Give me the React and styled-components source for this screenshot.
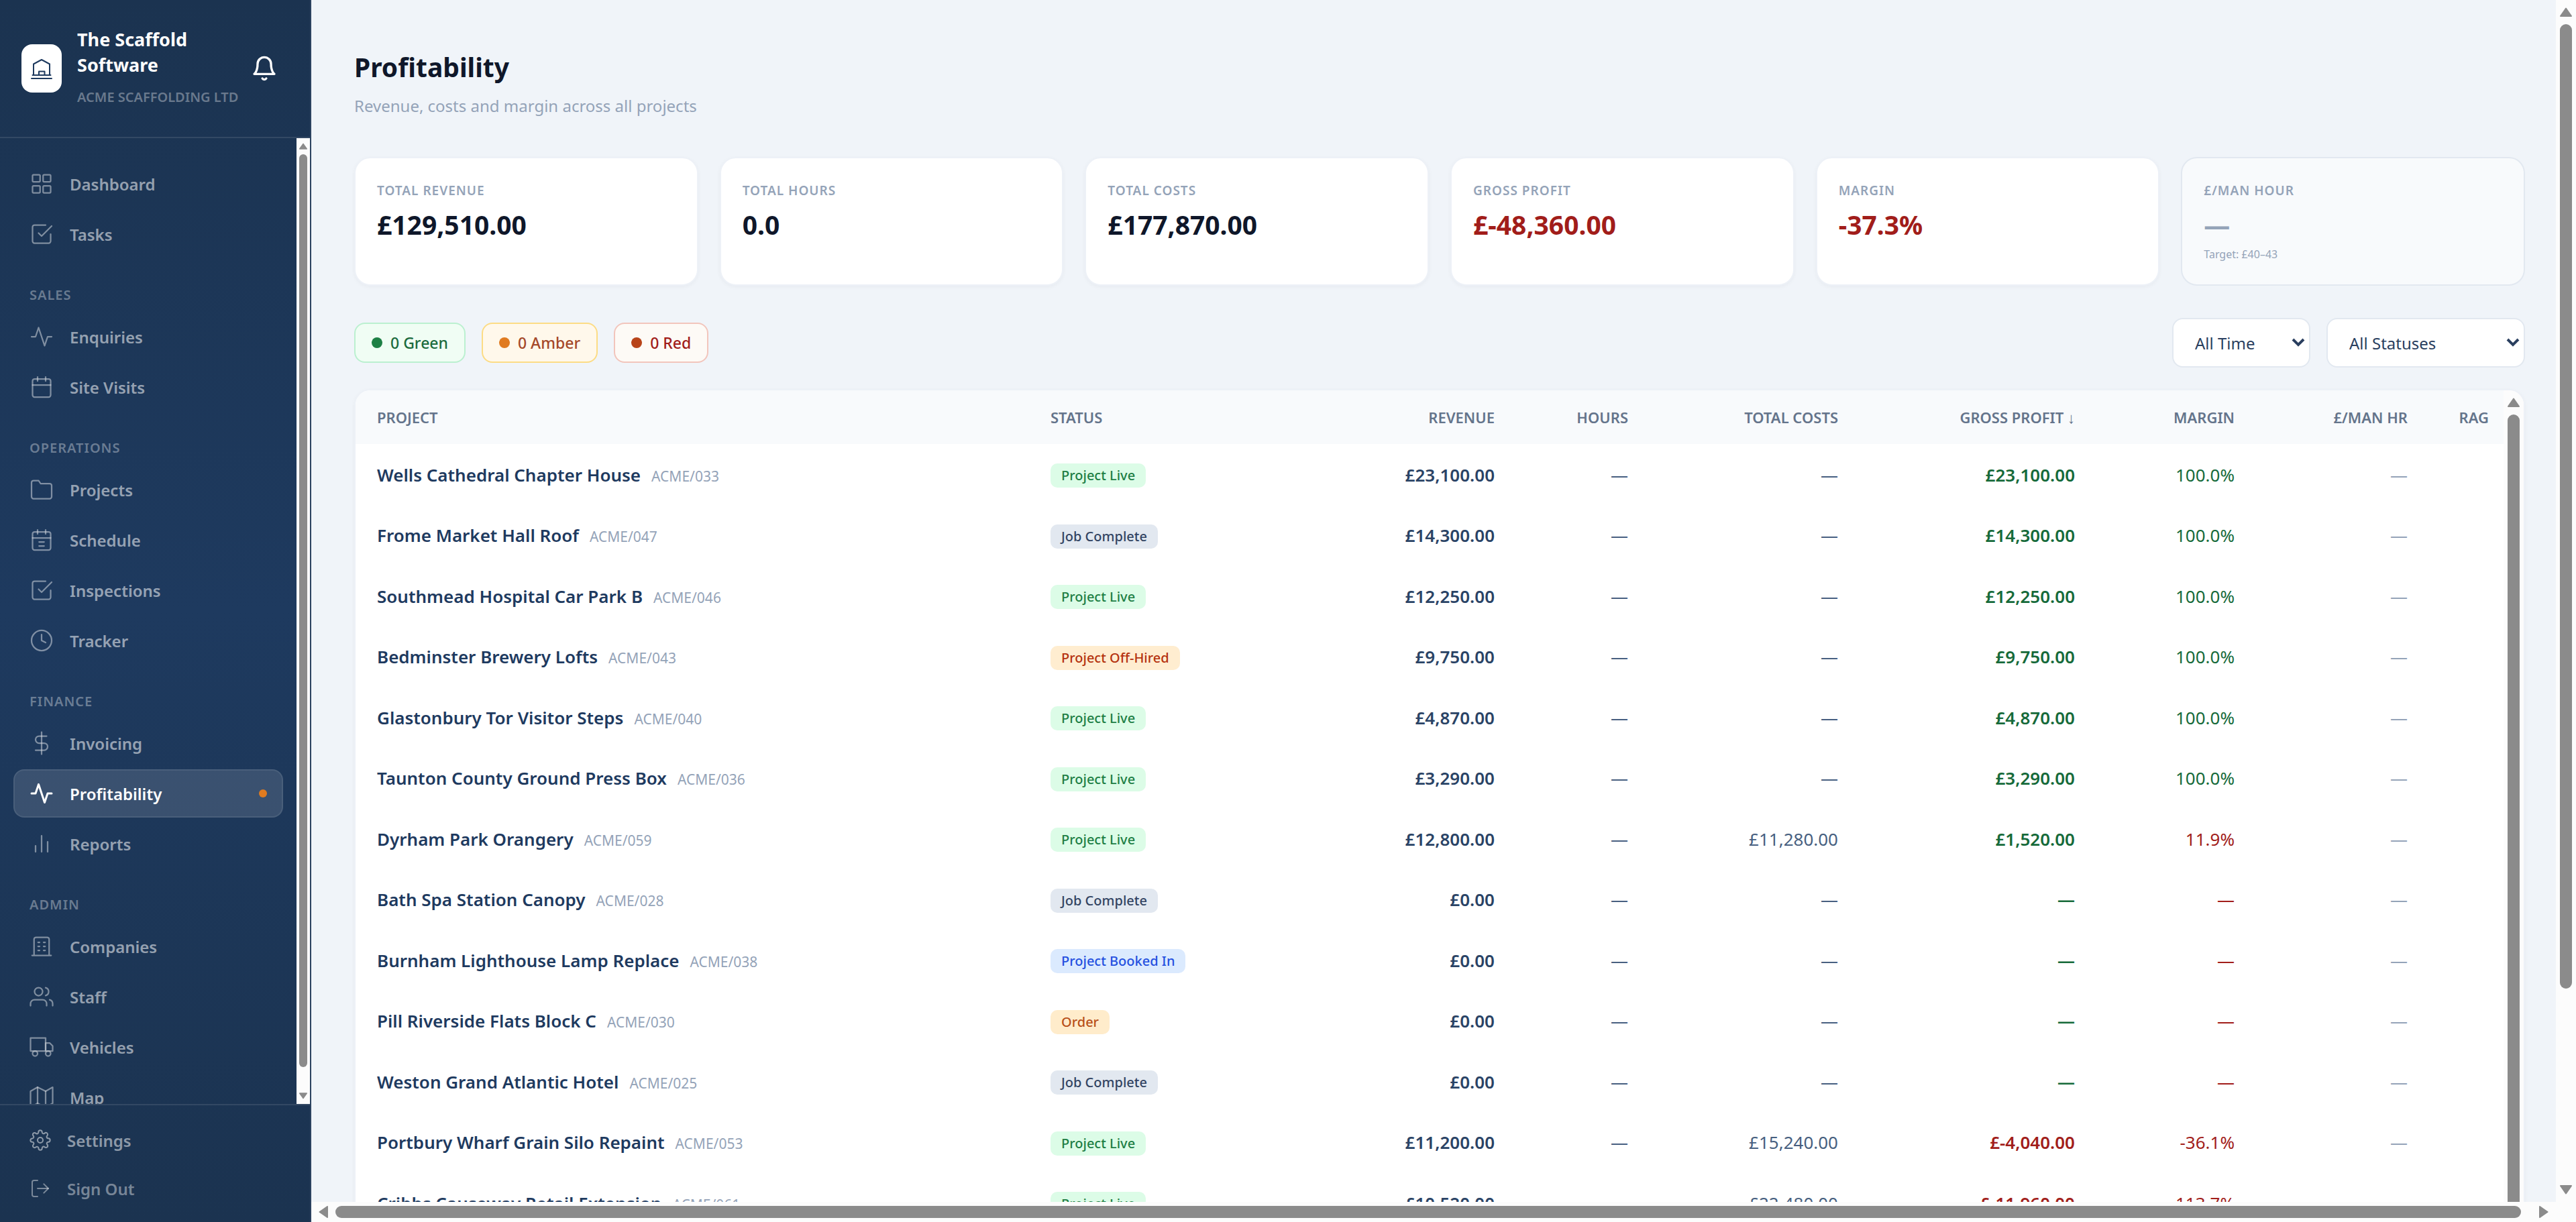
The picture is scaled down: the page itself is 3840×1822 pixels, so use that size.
import styled, { createGlobalStyle, css } from 'styled-components';
import {
    FiActivity, FiBarChart2, FiBell, FiCalendar, FiCheckSquare, FiClock, FiDollarSign,
    FiFolder, FiLogOut, FiMap, FiSettings, FiTruck, FiUsers,
} from 'react-icons/fi';

const GlobalStyle = createGlobalStyle`
    * {
        box-sizing: border-box;
    }
    body {
        margin: 0;
        font-family: "Noto Sans", "Segoe UI", sans-serif;
        background-color: #f0f4f9;
        color: #0f172a;
    }
    button, select {
        font-family: inherit;
    }
    a {
        color: inherit;
        text-decoration: none;
    }
`;

const Shell = styled.div`
    display: grid;
    grid-template-columns: 464px minmax(0, 1fr);
    height: 100vh;
    overflow: hidden;
`;

/* ---------- scrollbars ---------- */

const Track = styled.div`
    display: flex;
    flex: none;
    flex-direction: ${({ $horizontal }) => ($horizontal ? 'row' : 'column')};
    align-items: center;
    ${({ $horizontal }) => ($horizontal ? 'height' : 'width')}: ${({ $thick }) => $thick}px;
    background-color: #fcfcfc;
`;

const ArrowBox = styled.div`
    display: flex;
    flex: none;
    align-items: center;
    justify-content: center;
    width: ${({ $box }) => $box}px;
    height: ${({ $box }) => $box}px;
    color: #8b8b8b;
    svg {
        display: block;
        transform: rotate(${({ $turn }) => $turn}deg);
    }
`;

const ThumbLane = styled.div`
    display: flex;
    flex: 1;
    flex-direction: inherit;
    min-width: 0;
    min-height: 0;
`;

const Thumb = styled.div`
    flex: 0 0 ${({ $share }) => $share}%;
    ${({ $horizontal }) => ($horizontal ? 'height' : 'width')}: ${({ $size }) => $size}px;
    border-radius: 9px;
    background-color: #8b8b8b;
`;

const ScrollBar = ({ horizontal, thick = 30, thumb = 18, box = 36, share }) => {
    const arrow = (
        <svg width={thumb} height={thumb} viewBox="0 0 18 18" fill="currentColor" stroke="currentColor" strokeWidth="2" strokeLinejoin="round">
            <path d="M9 3.5 L17 15 H1 Z" />
        </svg>
    );
    return (
        <Track $horizontal={horizontal} $thick={thick} aria-hidden="true">
            <ArrowBox $box={box} $turn={horizontal ? -90 : 0}>{arrow}</ArrowBox>
            <ThumbLane>
                <Thumb $horizontal={horizontal} $size={thumb} $share={share} />
            </ThumbLane>
            <ArrowBox $box={box} $turn={horizontal ? 90 : 180}>{arrow}</ArrowBox>
        </Track>
    );
};

/* ---------- sidebar ---------- */

const Sidebar = styled.aside`
    display: flex;
    flex-direction: column;
    min-height: 0;
    border-right: 2px solid #2c4260;
    background: linear-gradient(180deg, #1b3350 0%, #1e3a5f 50%, #1b3350 100%);
`;

const Brand = styled.header`
    display: flex;
    align-items: center;
    padding: 40px 32px;
    border-bottom: 2px solid rgba(255, 255, 255, 0.1);
`;

const Logo = styled.div`
    display: flex;
    flex: none;
    align-items: center;
    justify-content: center;
    width: 60px;
    height: 72px;
    margin-right: 23px;
    border-radius: 16px;
    background-color: white;
    color: #1e3a5f;
`;

const BrandText = styled.div`
    flex: 1;
    min-width: 0;
    white-space: nowrap;
`;

const BrandName = styled.div`
    font-size: 27px;
    font-weight: 700;
    line-height: 38px;
    color: white;
    white-space: normal;
`;

const Company = styled.div`
    margin-top: 10px;
    font-size: 20px;
    font-weight: 600;
    line-height: 38px;
    color: rgba(255, 255, 255, 0.35);
`;

const BellButton = styled.button`
    display: flex;
    flex: none;
    padding: 16px;
    border: 0;
    background: none;
    color: white;
    font-size: 40px;
`;

const NavArea = styled.div`
    display: flex;
    flex: 1;
    min-height: 0;
    overflow: hidden;
`;

const Nav = styled.nav`
    display: flex;
    flex: 1;
    flex-direction: column;
    gap: 3px;
    padding: 32px 20px;
    overflow: hidden;
`;

const SectionLabel = styled.div`
    flex: none;
    padding: 39px 24px 10px;
    font-size: 20px;
    font-weight: 600;
    line-height: 26px;
    letter-spacing: 1px;
    color: rgba(255, 255, 255, 0.35);
`;

const NavLink = styled.a`
    display: flex;
    flex: none;
    align-items: center;
    gap: 24px;
    height: 72px;
    padding: 0 22px;
    border: 2px solid transparent;
    border-radius: 16px;
    font-size: 24px;
    font-weight: 600;
    color: rgba(255, 255, 255, 0.55);
    svg {
        flex: none;
        width: 36px;
        height: 36px;
        stroke-width: 1.5;
        opacity: 0.8;
    }
    ${({ $active }) => $active && css`
        border-color: rgba(255, 255, 255, 0.08);
        background-color: rgba(255, 255, 255, 0.13);
        color: white;
        svg {
            stroke-width: 2;
            opacity: 1;
        }
    `}
`;

const ActiveDot = styled.span`
    width: 12px;
    height: 12px;
    margin-left: auto;
    border-radius: 50%;
    background-color: #e07b20;
`;

const SidebarFooter = styled.div`
    padding: 16px 20px 14px;
    border-top: 2px solid rgba(255, 255, 255, 0.1);
`;

const FooterLink = styled(NavLink)`
    width: 100%;
    background: none;
    color: rgba(255, 255, 255, ${({ $dim }) => ($dim ? 0.42 : 0.5)});
    svg {
        width: 32px;
        height: 32px;
        opacity: 1;
    }
`;

const LogoIcon = () => (
    <svg width="36" height="36" viewBox="0 0 36 36" fill="none" stroke="currentColor" strokeWidth="2" strokeLinecap="round" strokeLinejoin="round" aria-hidden="true">
        <path d="M6 28V11.500L18 5l12 6.500V28" />
        <path d="M14 28v-5.500h8.500V28" />
        <path d="M4.500 28h27" />
        <path d="M3 33h30" />
    </svg>
);

const Glyph = ({ children }) => (
    <svg viewBox="0 0 24 24" fill="none" stroke="currentColor" strokeLinecap="round" strokeLinejoin="round" aria-hidden="true">
        {children}
    </svg>
);

const GridIcon = () => (
    <Glyph>
        <rect x="3" y="3" width="7.500" height="7" rx="1" />
        <rect x="13.500" y="3" width="7.500" height="7" rx="1" />
        <rect x="3" y="14" width="7.500" height="7" rx="1" />
        <rect x="13.500" y="14" width="7.500" height="7" rx="1" />
    </Glyph>
);

const ScheduleIcon = () => (
    <Glyph>
        <rect x="3" y="4" width="18" height="18" rx="2" />
        <path d="M16 2v4M8 2v4M3 10h18M9.500 14h5M9.500 18h5" />
    </Glyph>
);

const BuildingIcon = () => (
    <Glyph>
        <path d="M2.500 21h19M4.500 21V5a2 2 0 0 1 2-2h11a2 2 0 0 1 2 2v16" />
        <path d="M8.500 8h1.500M14 8h1.500M8.500 12h1.500M14 12h1.500M8.500 16h1.500M14 16h1.500" />
    </Glyph>
);

const navSections = [
    { items: [['Dashboard', GridIcon], ['Tasks', FiCheckSquare]] },
    { label: 'SALES', items: [['Enquiries', FiActivity], ['Site Visits', FiCalendar]] },
    {
        label: 'OPERATIONS',
        items: [['Projects', FiFolder], ['Schedule', ScheduleIcon], ['Inspections', FiCheckSquare], ['Tracker', FiClock]],
    },
    { label: 'FINANCE', items: [['Invoicing', FiDollarSign], ['Profitability', FiActivity], ['Reports', FiBarChart2]] },
    { label: 'ADMIN', items: [['Companies', BuildingIcon], ['Staff', FiUsers], ['Vehicles', FiTruck], ['Map', FiMap]] },
];

const SideMenu = () => (
    <Sidebar>
        <Brand>
            <Logo><LogoIcon /></Logo>
            <BrandText>
                <BrandName>The Scaffold Software</BrandName>
                <Company>ACME SCAFFOLDING LTD</Company>
            </BrandText>
            <BellButton aria-label="Notifications"><FiBell /></BellButton>
        </Brand>
        <NavArea>
            <Nav>
                {navSections.map(({ label, items }) => [
                    label && <SectionLabel key={label}>{label}</SectionLabel>,
                    ...items.map(([name, Icon]) => {
                        const active = name === 'Profitability';
                        return (
                            <NavLink key={name} href="#" $active={active} aria-current={active ? 'page' : undefined}>
                                <Icon />
                                {name}
                                {active && <ActiveDot />}
                            </NavLink>
                        );
                    }),
                ])}
            </Nav>
            <ScrollBar thick={20} thumb={12} box={24} share={97.8} />
        </NavArea>
        <SidebarFooter>
            <FooterLink href="#"><FiSettings />Settings</FooterLink>
            <FooterLink as="button" $dim><FiLogOut />Sign Out</FooterLink>
        </SidebarFooter>
    </Sidebar>
);

/* ---------- main area ---------- */

const Main = styled.main`
    display: flex;
    flex-direction: column;
    min-height: 0;
`;

const Viewport = styled.div`
    display: flex;
    flex: 1;
    min-height: 0;
`;

const Content = styled.div`
    flex: 1;
    min-width: 0;
    padding: 72px 46px 0 64px;
    overflow: hidden;
`;

const BottomBar = styled.div`
    display: grid;
    grid-template-columns: 1fr 30px;
    background-color: #fcfcfc;
`;

const Title = styled.h1`
    margin: 0;
    font-size: 39px;
    font-weight: 700;
    line-height: 56px;
`;

const Subtitle = styled.p`
    margin: 12px 0 58px;
    font-size: 24px;
    line-height: 36px;
    color: #94a3b8;
`;

const Cards = styled.section`
    display: grid;
    grid-template-columns: repeat(6, 1fr);
    gap: 32px;
`;

const Card = styled.div`
    height: 192px;
    padding: 32px;
    border: 2px solid #edf1f7;
    border-radius: 24px;
    background-color: white;
    box-shadow: 0 2px 6px rgba(15, 23, 42, 0.04);
    ${({ $muted }) => $muted && css`
        border-color: #e2e8f0;
        background-color: #f8fafc;
        box-shadow: none;
    `}
`;

const CardLabel = styled.div`
    font-size: 19px;
    font-weight: 600;
    line-height: 32px;
    letter-spacing: 1px;
    color: #94a3b8;
`;

const tones = {
    dark: '#0f172a',
    red: '#a11d1a',
    green: '#166a3a',
    muted: '#94a3b8',
    slate: '#475f80',
};

const CardValue = styled.div`
    margin-top: 12px;
    font-size: 39px;
    font-weight: 700;
    line-height: 46px;
    color: ${({ $tone }) => tones[$tone]};
`;

const CardNote = styled.div`
    margin-top: 8px;
    font-size: 16px;
    line-height: 26px;
    color: #94a3b8;
`;

const Toolbar = styled.div`
    display: flex;
    align-items: center;
    gap: 24px;
    margin: 48px 0 32px;
`;

const pillColors = {
    green: ['#f0fdf4', '#bbf0d0', '#1c6b3e', '#1e8045'],
    amber: ['#fff8eb', '#fcdc85', '#a5492a', '#e07b20'],
    red: ['#fdfaf6', '#f2c5bc', '#a11d1a', '#b8441a'],
};

const Pill = styled.button`
    display: flex;
    align-items: center;
    gap: 12px;
    height: 60px;
    padding: 0 24px;
    border: 2px solid ${({ $kind }) => pillColors[$kind][1]};
    border-radius: 16px;
    background-color: ${({ $kind }) => pillColors[$kind][0]};
    color: ${({ $kind }) => pillColors[$kind][2]};
    font-size: 23px;
    font-weight: 500;
    &::before {
        content: "";
        width: 16px;
        height: 16px;
        border-radius: 50%;
        background-color: ${({ $kind }) => pillColors[$kind][3]};
    }
`;

const Filters = styled.div`
    display: flex;
    gap: 24px;
    margin-left: auto;
`;

const SelectWrap = styled.div`
    position: relative;
    svg {
        position: absolute;
        top: 28px;
        right: 8px;
        pointer-events: none;
    }
`;

const Select = styled.select`
    display: block;
    width: ${({ $width }) => $width}px;
    height: 74px;
    padding: 0 32px;
    border: 2px solid #e2e8f0;
    border-radius: 16px;
    appearance: none;
    background-color: white;
    color: #2a3f5f;
    font-size: 24px;
`;

const FilterSelect = ({ label, width }) => (
    <SelectWrap>
        <Select $width={width} aria-label={label}>
            <option>{label}</option>
        </Select>
        <svg width="20" height="16" viewBox="0 0 20 16" fill="none" stroke="#2a3f5f" strokeWidth="4" aria-hidden="true">
            <path d="M2 4l8 8 8-8" />
        </svg>
    </SelectWrap>
);

const TablePanel = styled.section`
    display: flex;
    min-height: 1400px;
    border: 2px solid #edf1f7;
    border-radius: 24px;
    overflow: hidden;
    background-color: white;
    box-shadow: 0 2px 6px rgba(15, 23, 42, 0.04);
`;

const TableArea = styled.div`
    flex: 1;
    min-width: 0;
`;

const Table = styled.table`
    width: 100%;
    table-layout: fixed;
    border-collapse: collapse;
    tbody tr {
        height: 91px;
    }
    tbody tr:nth-child(even) {
        height: 90px;
    }
`;

const Th = styled.th`
    height: 80px;
    padding: 0 32px;
    background-color: #f8fafc;
    color: #64748b;
    font-size: 22px;
    font-weight: 600;
    text-align: ${({ $left }) => ($left ? 'left' : 'right')};
    white-space: nowrap;
    &:last-child {
        padding: 0 22px 0 0;
    }
`;

const SortButton = styled.button`
    padding: 0;
    border: 0;
    background: none;
    color: inherit;
    font-size: inherit;
    font-weight: inherit;
`;

const Td = styled.td`
    padding: 0 32px;
    color: ${({ $tone }) => tones[$tone] || '#2a4365'};
    font-size: 26px;
    font-weight: ${({ $strong }) => $strong || 400};
    text-align: ${({ $left }) => ($left ? 'left' : 'right')};
    white-space: nowrap;
`;

const ProjectName = styled.a`
    margin-right: 16px;
    font-weight: 600;
    color: #1e3a5f;
`;

const ProjectCode = styled.span`
    font-size: 21px;
    color: #94a3b8;
`;

const badgeColors = {
    'Project Live': ['#dcfce7', '#1e7f45'],
    'Job Complete': ['#e2e8f0', '#334563'],
    'Project Off-Hired': ['#ffedd0', '#b5330f'],
    'Project Booked In': ['#dbeafe', '#2450e0'],
    Order: ['#ffeccb', '#b8501a'],
};

const Badge = styled.span`
    display: inline-block;
    padding: 0 16px;
    border-radius: 10px;
    background-color: ${({ $status }) => badgeColors[$status][0]};
    color: ${({ $status }) => badgeColors[$status][1]};
    font-size: 20px;
    font-weight: 500;
    line-height: 36px;
    vertical-align: middle;
`;

const cards = [
    ['TOTAL REVENUE', '£129,510.00', 'dark'],
    ['TOTAL HOURS', '0.0', 'dark'],
    ['TOTAL COSTS', '£177,870.00', 'dark'],
    ['GROSS PROFIT', '£-48,360.00', 'red'],
    ['MARGIN', '-37.3%', 'red'],
];

const columns = [1004, 456, 270, 199, 313, 353, 238, 258, 111];

const projects = [
    ['Wells Cathedral Chapter House', '033', 'Project Live', '£23,100.00', '—', '£23,100.00', '100.0%'],
    ['Frome Market Hall Roof', '047', 'Job Complete', '£14,300.00', '—', '£14,300.00', '100.0%'],
    ['Southmead Hospital Car Park B', '046', 'Project Live', '£12,250.00', '—', '£12,250.00', '100.0%'],
    ['Bedminster Brewery Lofts', '043', 'Project Off-Hired', '£9,750.00', '—', '£9,750.00', '100.0%'],
    ['Glastonbury Tor Visitor Steps', '040', 'Project Live', '£4,870.00', '—', '£4,870.00', '100.0%'],
    ['Taunton County Ground Press Box', '036', 'Project Live', '£3,290.00', '—', '£3,290.00', '100.0%'],
    ['Dyrham Park Orangery', '059', 'Project Live', '£12,800.00', '£11,280.00', '£1,520.00', '11.9%'],
    ['Bath Spa Station Canopy', '028', 'Job Complete', '£0.00', '—', '—', '—'],
    ['Burnham Lighthouse Lamp Replace', '038', 'Project Booked In', '£0.00', '—', '—', '—'],
    ['Pill Riverside Flats Block C', '030', 'Order', '£0.00', '—', '—', '—'],
    ['Weston Grand Atlantic Hotel', '025', 'Job Complete', '£0.00', '—', '—', '—'],
    ['Portbury Wharf Grain Silo Repaint', '053', 'Project Live', '£11,200.00', '£15,240.00', '£-4,040.00', '-36.1%'],
    ['Cribbs Causeway Retail Extension', '061', 'Project Live', '£10,520.00', '£22,480.00', '£-11,960.00', '-113.7%'],
];

const ProjectTable = () => (
    <Table>
        <colgroup>
            {columns.map((width, i) => <col key={i} width={width} />)}
        </colgroup>
        <thead>
            <tr>
                <Th $left>PROJECT</Th>
                <Th $left>STATUS</Th>
                <Th>REVENUE</Th>
                <Th>HOURS</Th>
                <Th>TOTAL COSTS</Th>
                <Th aria-sort="descending"><SortButton>GROSS PROFIT ↓</SortButton></Th>
                <Th>MARGIN</Th>
                <Th>£/MAN HR</Th>
                <Th>RAG</Th>
            </tr>
        </thead>
        <tbody>
            {projects.map(([name, code, status, revenue, costs, profit, margin]) => (
                <tr key={code}>
                    <Td $left>
                        <ProjectName href="#">{name}</ProjectName>
                        <ProjectCode>ACME/{code}</ProjectCode>
                    </Td>
                    <Td $left><Badge $status={status}>{status}</Badge></Td>
                    <Td $strong={600}>{revenue}</Td>
                    <Td $tone="slate">—</Td>
                    <Td $tone="slate">{costs}</Td>
                    <Td $tone={profit.includes('-') ? 'red' : 'green'} $strong={600}>{profit}</Td>
                    <Td $tone={margin === '100.0%' ? 'green' : 'red'}>{margin}</Td>
                    <Td $tone="muted">—</Td>
                    <Td />
                </tr>
            ))}
        </tbody>
    </Table>
);

const App = () => {
    return (
        <Shell>
            <GlobalStyle />
            <SideMenu />
            <Main>
                <Viewport>
                    <Content>
                        <Title>Profitability</Title>
                        <Subtitle>Revenue, costs and margin across all projects</Subtitle>
                        <Cards>
                            {cards.map(([label, value, tone]) => (
                                <Card key={label}>
                                    <CardLabel>{label}</CardLabel>
                                    <CardValue $tone={tone}>{value}</CardValue>
                                </Card>
                            ))}
                            <Card $muted>
                                <CardLabel>£/MAN HOUR</CardLabel>
                                <CardValue $tone="muted">—</CardValue>
                                <CardNote>Target: £40–43</CardNote>
                            </Card>
                        </Cards>
                        <Toolbar>
                            <Pill $kind="green">0 Green</Pill>
                            <Pill $kind="amber">0 Amber</Pill>
                            <Pill $kind="red">0 Red</Pill>
                            <Filters>
                                <FilterSelect label="All Time" width={206} />
                                <FilterSelect label="All Statuses" width={296} />
                            </Filters>
                        </Toolbar>
                        <TablePanel>
                            <TableArea><ProjectTable /></TableArea>
                            <ScrollBar share={90} />
                        </TablePanel>
                    </Content>
                    <ScrollBar share={83.6} />
                </Viewport>
                <BottomBar>
                    <ScrollBar horizontal share={99.5} />
                </BottomBar>
            </Main>
        </Shell>
    );
};

export default App;
